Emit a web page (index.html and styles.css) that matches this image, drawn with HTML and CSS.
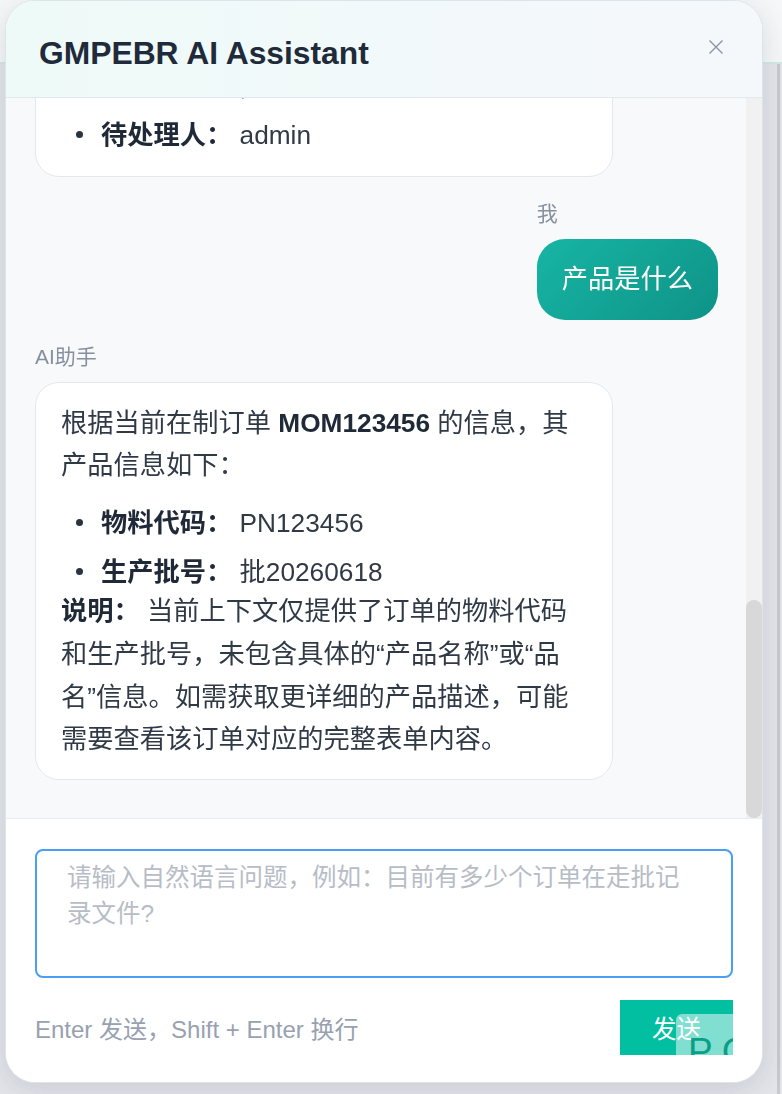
FILE: index.html
```html
<!DOCTYPE html>
<html lang="zh-CN">
<head>
<meta charset="utf-8">
<title>GMPEBR AI Assistant</title>
<link rel="stylesheet" href="styles.css">
</head>
<body>
<div class="page">
  <div class="page-top"></div>
  <div class="page-body">
    <div class="page-main"></div>
    <div class="page-rail"></div>
  </div>
</div>

<section class="dialog">
  <header class="dlg-head">
    <h1 class="dlg-title">GMPEBR AI Assistant</h1>
    <button class="dlg-close" aria-label="关闭">
      <svg width="16" height="16" viewBox="0 0 16 16"><path d="M1.5 1.5L14.5 14.5M14.5 1.5L1.5 14.5" stroke="#8b94a3" stroke-width="1.4" fill="none"/></svg>
    </button>
  </header>

  <div class="messages-wrap">
    <div class="messages">
      <div class="thread">
        <div class="msg ai">
          <div class="bubble ai-bubble">
            <ul>
              <li><strong>工序：</strong> 称量, 配料</li>
              <li><strong>待处理人：</strong> admin</li>
            </ul>
          </div>
        </div>
        <div class="msg user">
          <div class="msg-label">我</div>
          <div class="bubble user-bubble">产品是什么</div>
        </div>
        <div class="msg ai">
          <div class="msg-label">AI助手</div>
          <div class="bubble ai-bubble">
            <p>根据当前在制订单 <strong>MOM123456</strong> 的信息，其产品信息如下：</p>
            <ul>
              <li><strong>物料代码：</strong> PN123456</li>
              <li><strong>生产批号：</strong> 批20260618</li>
            </ul>
            <p><strong>说明：</strong> 当前上下文仅提供了订单的物料代码和生产批号，未包含具体的“产品名称”或“品名”信息。如需获取更详细的产品描述，可能需要查看该订单对应的完整表单内容。</p>
          </div>
        </div>
      </div>
    </div>
    <div class="scrollbar" aria-hidden="true"><div class="scroll-thumb"></div></div>
  </div>

  <footer class="dlg-foot">
    <textarea class="ask" placeholder="请输入自然语言问题，例如：目前有多少个订单在走批记录文件?"></textarea>
    <div class="foot-row">
      <span class="hint">Enter 发送，Shift + Enter 换行</span>
      <button class="send">发送<span class="float-badge">PC</span></button>
    </div>
  </footer>
</section>
</body>
</html>
```

FILE: styles.css
```css
* { box-sizing: border-box; }

html, body {
  margin: 0;
  height: 100%;
}

body {
  font-family: "Liberation Sans", "Noto Sans CJK SC", sans-serif;
  background: #e3e5ea;
  color: #2f3a48;
  overflow: hidden;
}

/* page underneath the dialog */
.page {
  height: 100%;
  display: flex;
  flex-direction: column;
}
.page-top {
  height: 64px;
  background: #f5f7f8;
  border-bottom: 2px solid #d3e9e5;
}
.page-body {
  flex: 1;
  display: flex;
}
.page-main {
  flex: 1;
}
.page-rail {
  width: 3px;
  margin-right: 2px;
  background: #c8c9cc;
}

/* dialog */
.dialog {
  position: fixed;
  left: 5px;
  top: 0;
  width: 758px;
  height: 1083px;
  display: flex;
  flex-direction: column;
  background: #fff;
  border: 1px solid #dce4ec;
  border-radius: 30px;
  overflow: hidden;
  box-shadow: 0 6px 28px rgba(40, 50, 70, 0.14);
}

.dlg-head {
  height: 97px;
  flex: none;
  display: flex;
  align-items: center;
  justify-content: space-between;
  padding: 8px 38px 0 33px;
  background: linear-gradient(90deg, #eefaf8 0%, #f2f9fa 50%, #f5f8fb 100%);
  border-bottom: 1px solid #e1e9ef;
}
.dlg-title {
  margin: 0;
  font-size: 31.8px;
  font-weight: 700;
  color: #1f2b3a;
}
.dlg-close {
  border: 0;
  background: transparent;
  padding: 0;
  width: 16px;
  height: 16px;
  margin-top: -12px;
  display: flex;
}

/* messages */
.messages-wrap {
  flex: 1;
  min-height: 0;
  display: flex;
  background: #f8f9fb;
}
.messages {
  flex: 1;
  min-width: 0;
  display: flex;
  flex-direction: column-reverse;
  overflow: hidden;
}
.scrollbar {
  width: 16px;
  flex: none;
  background: #f1f1f1;
  display: flex;
  flex-direction: column;
  justify-content: flex-end;
}
.scroll-thumb {
  height: 218px;
  background: #d8d8d8;
  border-radius: 8px;
}

.thread {
  flex: none;
  padding: 30px 28px 38px 29px;
  display: flex;
  flex-direction: column;
  gap: 22px;
}

.msg {
  display: flex;
  flex-direction: column;
}
.msg.user {
  align-self: flex-end;
  align-items: flex-start;
  max-width: 85%;
}
.msg.ai {
  align-items: flex-start;
}

.msg-label {
  font-size: 21px;
  line-height: 30px;
  color: #86909f;
  margin-bottom: 10px;
}

.bubble {
  font-size: 26.25px;
}

.user-bubble {
  color: #fff;
  line-height: 41px;
  padding: 20px 25px;
  border-radius: 28px;
  background: linear-gradient(135deg, #17b5a4 0%, #0e9387 100%);
}

.ai-bubble {
  width: 84.6%;
  background: #fff;
  border: 1.5px solid #e2e8f0;
  border-radius: 24px;
  padding: 19px 25px 18px 25px;
  line-height: 42.7px;
  color: #303a47;
}
.ai-bubble p {
  margin: 0;
}
.ai-bubble strong {
  font-weight: 700;
  color: #1f2937;
}
.ai-bubble ul {
  list-style: none;
  margin: 19px 0 0;
  padding: 0 0 0 40px;
}
.ai-bubble ul:first-child {
  margin-top: 0;
}
.ai-bubble ul:last-child {
  margin-bottom: 5px;
}
.ai-bubble li {
  line-height: 35px;
}
.ai-bubble li + li {
  margin-top: 14px;
}
.ai-bubble li::before {
  content: "";
  display: inline-block;
  width: 7px;
  height: 7px;
  border-radius: 50%;
  background: #2a3441;
  margin-left: -25px;
  margin-right: 18px;
  vertical-align: 6px;
}

/* footer */
.dlg-foot {
  flex: none;
  height: 264px;
  background: #fff;
  border-top: 1px solid #e6edf3;
  padding: 30px 29px 27px 29px;
  display: flex;
  flex-direction: column;
}
.ask {
  display: block;
  width: 100%;
  height: 129px;
  resize: none;
  border: 2px solid #4b9ef4;
  border-radius: 8px;
  padding: 9px 30px;
  font-family: "Liberation Sans", "Noto Sans CJK SC", sans-serif;
  font-size: 24.5px;
  line-height: 36px;
  color: #2f3a48;
  outline: none;
  background: #fff;
}
.ask::placeholder {
  color: #b7bdc7;
}

.foot-row {
  margin-top: 22px;
  display: flex;
  align-items: center;
  justify-content: space-between;
}
.hint {
  font-size: 24px;
  color: #98a1b0;
}
.send {
  position: relative;
  overflow: hidden;
  width: 113px;
  height: 55px;
  border: 0;
  border-radius: 0;
  background: #02bfa2;
  color: #fff;
  font-family: "Liberation Sans", "Noto Sans CJK SC", sans-serif;
  font-size: 24.5px;
  padding: 0;
  cursor: pointer;
}
.float-badge {
  position: absolute;
  left: 56px;
  top: 14px;
  width: 70px;
  height: 60px;
  border-top-left-radius: 6px;
  background: rgba(255, 255, 255, 0.5);
  color: #0a9f87;
  font-size: 37px;
  line-height: 1;
  padding: 19px 0 0 12px;
  letter-spacing: 9px;
  text-align: left;
}
```
